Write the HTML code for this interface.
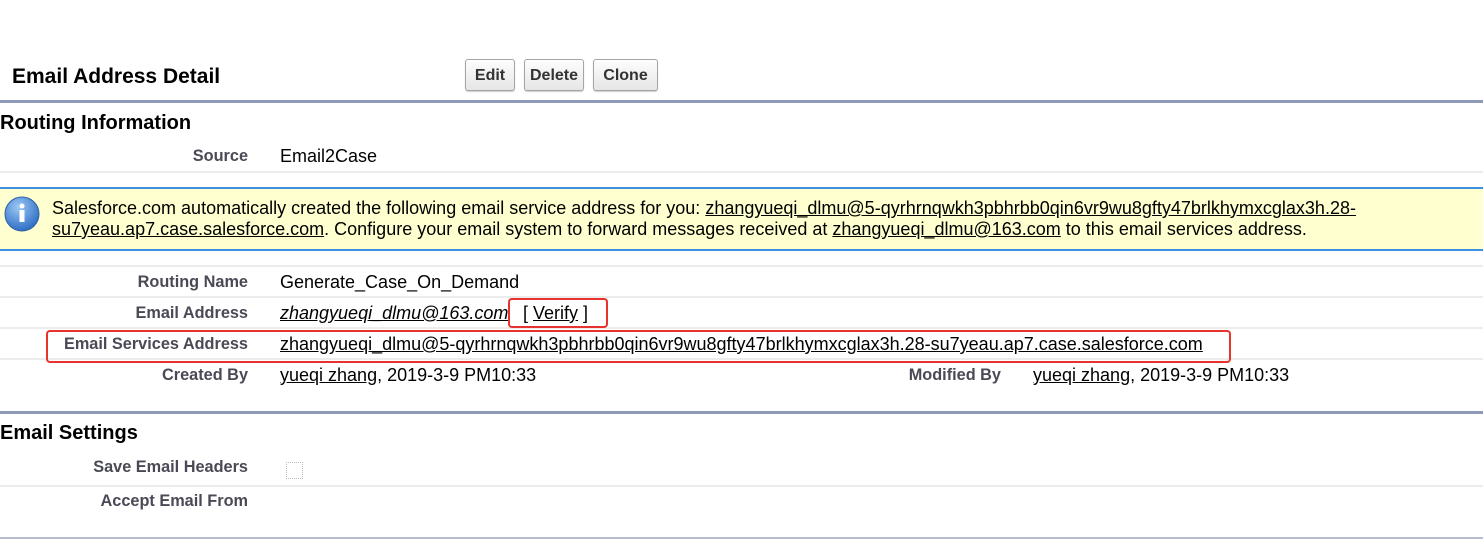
<!DOCTYPE html>
<html><head><meta charset="utf-8"><style>
body{margin:0;width:1483px;height:540px;background:#fff;position:relative;overflow:hidden;font-family:"Liberation Sans",Arial,sans-serif;color:#000}
.a{position:absolute;white-space:nowrap}
.lbl{position:absolute;right:1235px;font-weight:bold;font-size:16.3px;color:#4a4a56;white-space:nowrap;line-height:18px}
.val{position:absolute;left:280px;font-size:18px;line-height:18px;white-space:nowrap;color:#000}
.hr{position:absolute;left:0;width:1483px;height:2px;background:#ececec}
.btn{position:absolute;top:59px;height:30px;border:1px solid #a5a5a5;border-radius:3px;background:linear-gradient(#fdfdfd,#e6e6e6);font-weight:bold;font-size:16px;text-align:center;line-height:32px;color:#333;box-shadow:0 1px 1px #ccc}
u{text-decoration:underline}
.red{position:absolute;border:2px solid #e8322e;border-radius:4px}
</style></head><body>
<div class="a" style="left:12px;top:65px;font-size:21px;font-weight:bold">Email Address Detail</div>
<div class="btn" style="left:465px;width:48px">Edit</div>
<div class="btn" style="left:524px;width:58px">Delete</div>
<div class="btn" style="left:593px;width:63px">Clone</div>
<div class="a" style="left:0;top:100px;width:1483px;height:3px;background:#8e9ab8"></div>
<div class="a" style="left:0;top:112px;font-size:20px;font-weight:bold">Routing Information</div>
<div class="lbl" style="top:147px">Source</div><div class="val" style="top:147px">Email2Case</div>
<div class="hr" style="top:171px"></div>
<div class="a" style="left:0;top:187px;width:1483px;height:60px;border-top:2px solid #3d8fe0;border-bottom:2px solid #3d8fe0;background:#ffffcf"></div>
<svg class="a" style="left:4px;top:196px" width="36" height="36" viewBox="0 0 36 36"><defs><radialGradient id="g" cx="40%" cy="30%" r="70%"><stop offset="0" stop-color="#9cc8f5"/><stop offset="1" stop-color="#2f6fc4"/></radialGradient></defs><circle cx="18" cy="18" r="17" fill="url(#g)" stroke="#2b5fa8"/><circle cx="18" cy="10" r="2.5" fill="#fff"/><rect x="15.5" y="14" width="5" height="12" fill="#fff"/></svg>
<div class="a" style="left:52px;top:198px;font-size:18px;line-height:21px">Salesforce.com automatically created the following email service address for you: <u>zhangyueqi_dlmu@5-qyrhrnqwkh3pbhrbb0qin6vr9wu8gfty47brlkhymxcglax3h.28-</u><br><u>su7yeau.ap7.case.salesforce.com</u>. Configure your email system to forward messages received at <u>zhangyueqi_dlmu@163.com</u> to this email services address.</div>
<div class="hr" style="top:265px"></div>
<div class="lbl" style="top:273px">Routing Name</div><div class="val" style="top:273px">Generate_Case_On_Demand</div>
<div class="hr" style="top:296px"></div>
<div class="lbl" style="top:304px">Email Address</div><div class="val" style="top:304px"><i><u>zhangyueqi_dlmu@163.com</u></i></div>
<div class="val" style="top:304px;left:523px">[ <u>Verify</u> ]</div>
<div class="hr" style="top:327px"></div>
<div class="lbl" style="top:335px">Email Services Address</div><div class="val" style="top:335px"><u>zhangyueqi_dlmu@5-qyrhrnqwkh3pbhrbb0qin6vr9wu8gfty47brlkhymxcglax3h.28-su7yeau.ap7.case.salesforce.com</u></div>
<div class="hr" style="top:358px"></div>
<div class="lbl" style="top:366px">Created By</div><div class="val" style="top:366px"><u>yueqi zhang</u>, 2019-3-9 PM10:33</div>
<div class="lbl" style="top:366px;right:482px">Modified By</div><div class="val" style="top:366px;left:1033px"><u>yueqi zhang</u>, 2019-3-9 PM10:33</div>
<div class="red" style="left:508px;top:298px;width:96px;height:26px"></div>
<div class="red" style="left:46px;top:330px;width:1181px;height:29px"></div>
<div class="a" style="left:0;top:411px;width:1483px;height:3px;background:#8e9ab8"></div>
<div class="a" style="left:0;top:422px;font-size:20px;font-weight:bold">Email Settings</div>
<div class="lbl" style="top:458px">Save Email Headers</div>
<div class="a" style="left:286px;top:462px;width:15px;height:15px;border:1px dotted #bbb"></div>
<div class="hr" style="top:485px"></div>
<div class="lbl" style="top:492px">Accept Email From</div>
<div class="a" style="left:0;top:537px;width:1483px;height:2px;background:#b7bdcc"></div>
</body></html>
